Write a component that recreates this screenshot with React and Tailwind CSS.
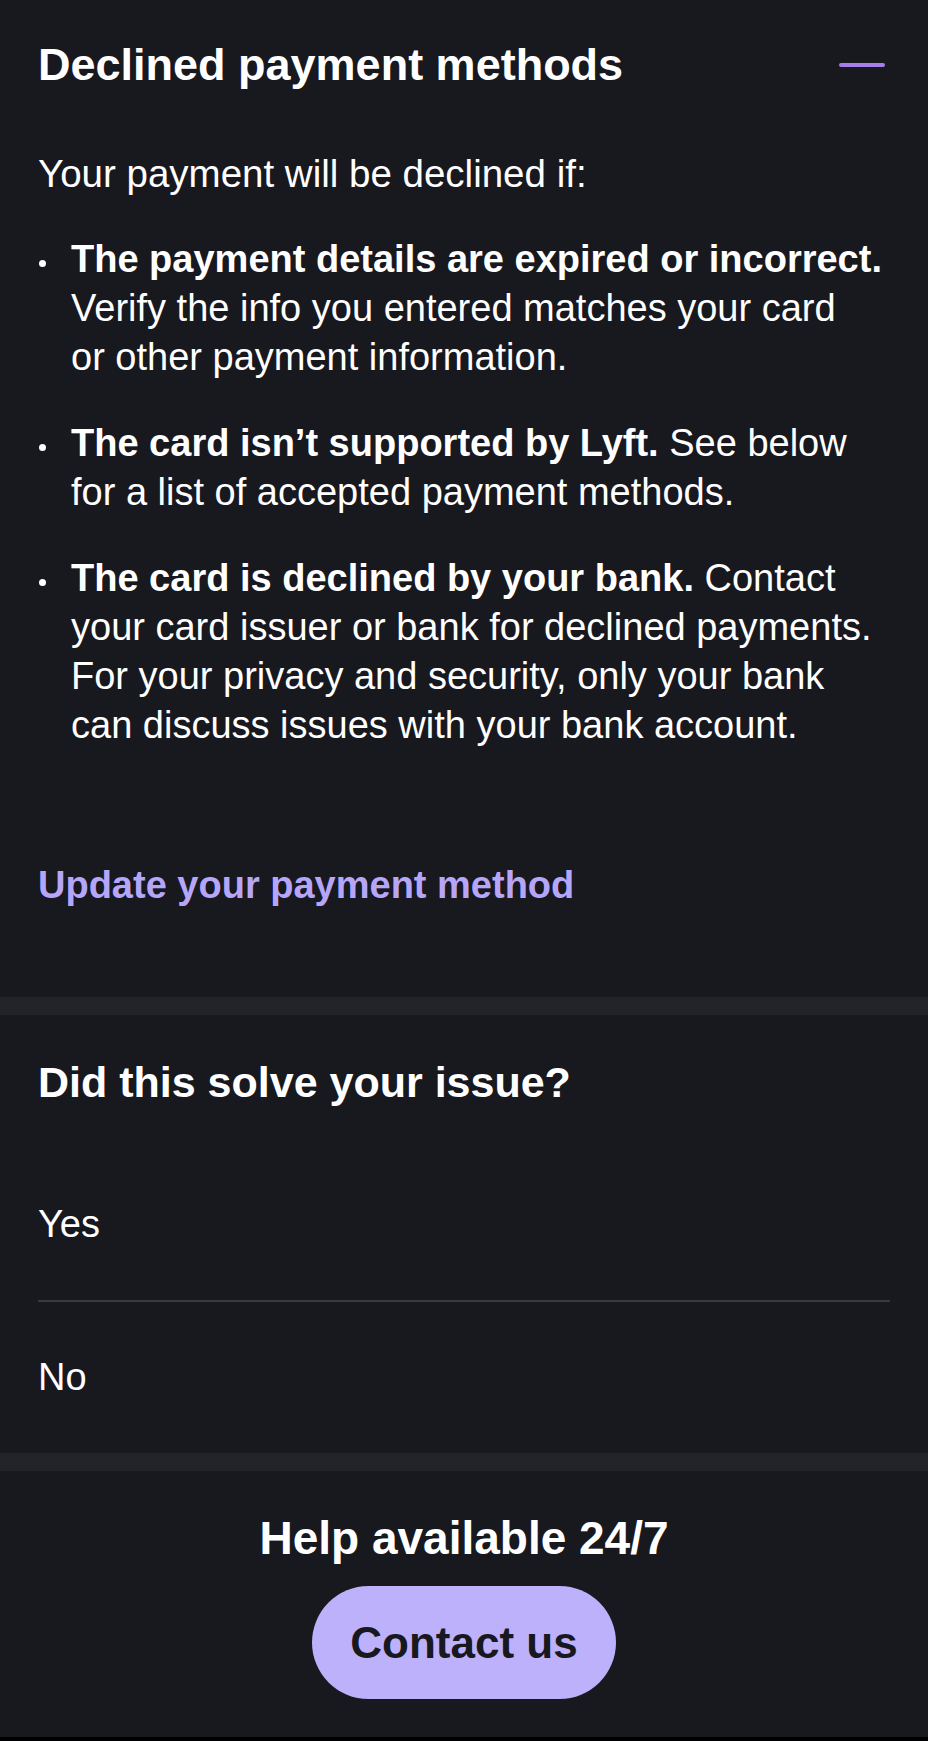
import React from 'react';

export default function App() {
  return (
    <div className="min-h-screen w-full bg-[#18181f] text-white font-['Liberation_Sans',Arial,sans-serif] flex flex-col">
      {/* Declined payment methods */}
      <section className="px-[38px] pt-[40px] pb-[87px]">
        <div className="flex items-center justify-between">
          <h1 className="text-[45px] leading-[50px] font-bold">Declined payment methods</h1>
          <div className="w-[46px] h-[4px] rounded-sm bg-[#a57ee8] mr-[5px]" />
        </div>

        <p className="mt-[59px] text-[38.5px] leading-[49px]">Your payment will be declined if:</p>

        <ul className="mt-[37px] flex flex-col gap-[37px]">
          <li className="flex">
            <div className="w-[33px] shrink-0 pt-[25px] pl-[1px]">
              <div className="w-[7px] h-[7px] rounded-full bg-white" />
            </div>
            <p className="text-[38px] leading-[49px]">
              <b>The payment details are expired or incorrect.</b>
              <br />
              Verify the info you entered matches your card
              <br />
              or other payment information.
            </p>
          </li>
          <li className="flex">
            <div className="w-[33px] shrink-0 pt-[25px] pl-[1px]">
              <div className="w-[7px] h-[7px] rounded-full bg-white" />
            </div>
            <p className="text-[38px] leading-[49px]">
              <b>The card isn’t supported by Lyft.</b> See below
              <br />
              for a list of accepted payment methods.
            </p>
          </li>
          <li className="flex">
            <div className="w-[33px] shrink-0 pt-[25px] pl-[1px]">
              <div className="w-[7px] h-[7px] rounded-full bg-white" />
            </div>
            <p className="text-[38px] leading-[49px]">
              <b>The card is declined by your bank.</b> Contact
              <br />
              your card issuer or bank for declined payments.
              <br />
              For your privacy and security, only your bank
              <br />
              can discuss issues with your bank account.
            </p>
          </li>
        </ul>

        <a className="block mt-[111px] text-[38px] leading-[49px] font-bold text-[#b6a6fa]">Update your payment method</a>
      </section>

      <div className="h-[18px] bg-[#232429]" />

      {/* Feedback */}
      <section className="px-[38px] pt-[42px]">
        <h2 className="text-[43px] leading-[50px] font-bold">Did this solve your issue?</h2>
        <div className="mt-[42px] flex flex-col">
          <button className="text-left py-[51px] text-[38px] leading-[49px] border-b-2 border-[#3a3b41]">Yes</button>
          <button className="text-left py-[51px] text-[38px] leading-[49px]">No</button>
        </div>
      </section>

      <div className="h-[18px] bg-[#232429]" />

      {/* Contact */}
      <section className="flex flex-col items-center pt-[42px] pb-[38px]">
        <h3 className="text-[46px] leading-[50px] font-bold">Help available 24/7</h3>
        <button className="mt-[23px] h-[113px] px-[38px] rounded-full bg-[#bdb1fc] text-[#18181f] text-[44px] leading-[50px] font-bold flex items-center">
          Contact us
        </button>
      </section>

      <div className="h-[4px] bg-black" />
    </div>
  );
}
